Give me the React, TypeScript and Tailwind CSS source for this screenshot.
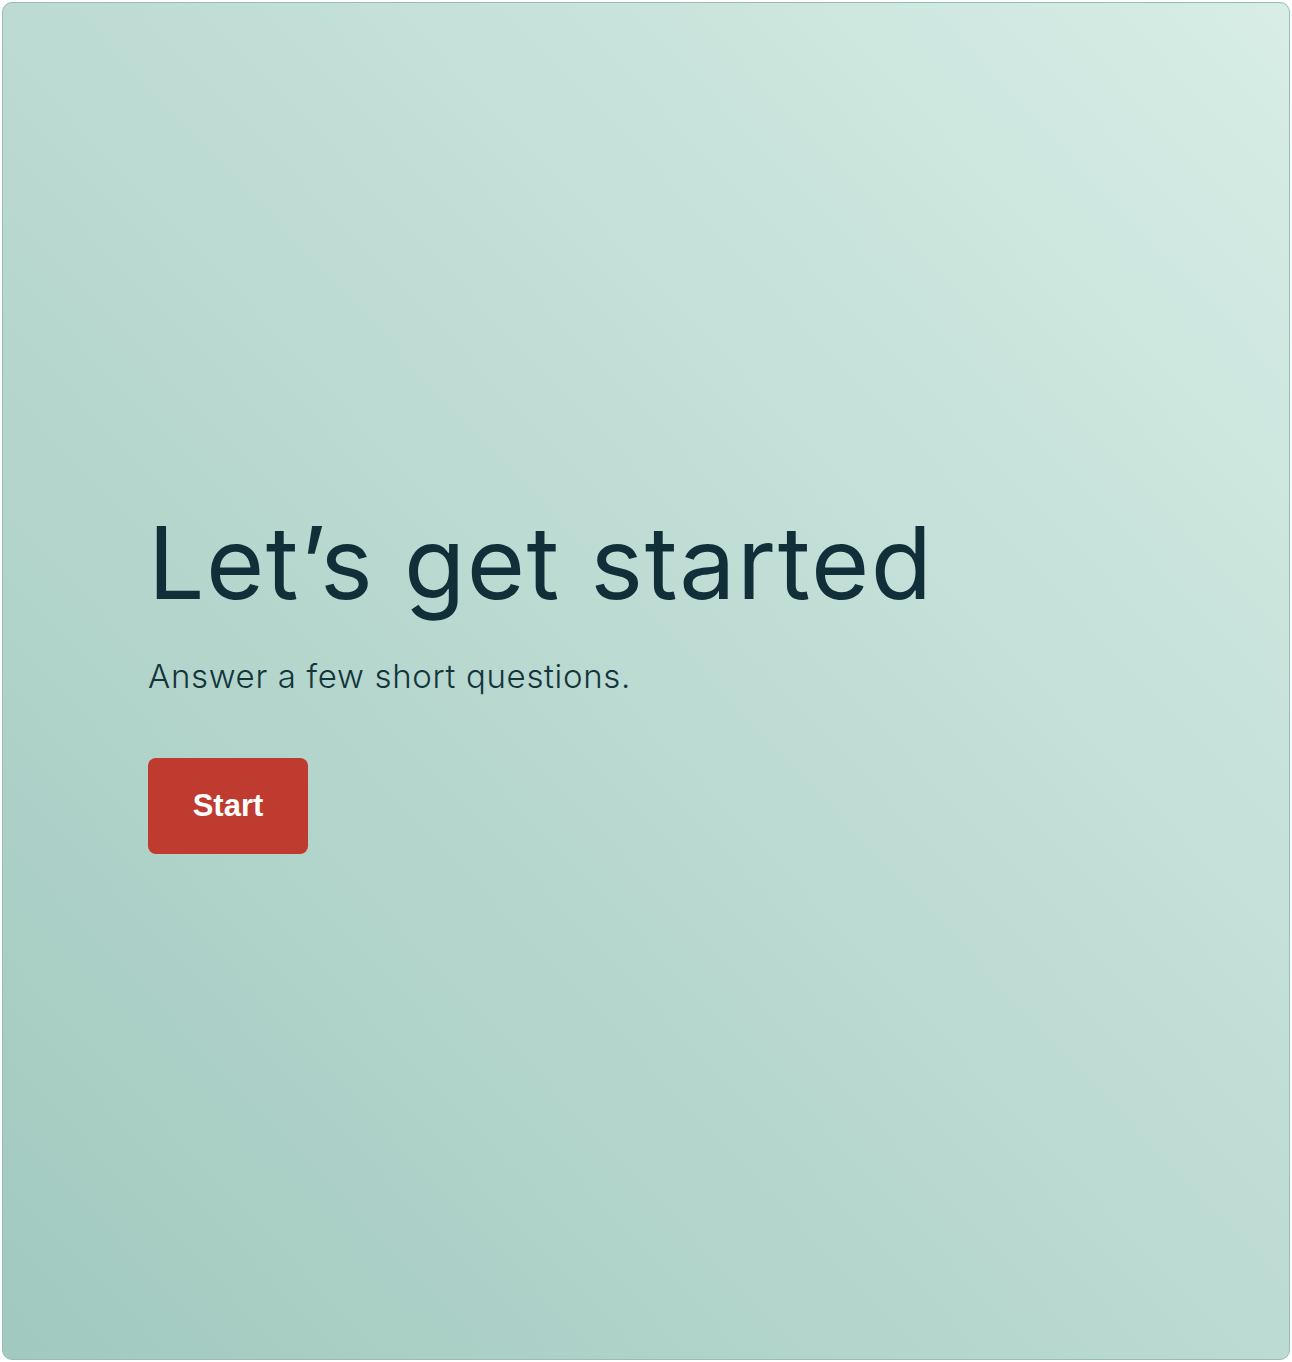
export default function App() {
  return (
    <div className="min-h-screen bg-white p-[2px]">
      <div className="flex h-[1358px] flex-col justify-center rounded-[10px] border border-[#96bfb4] bg-gradient-to-tr from-[#a1c9bf] to-[#d7ede6] pl-[145px]">
        <h1 className="font-['Inter',sans-serif] text-[100px] font-normal leading-[1.1] tracking-[0.015em] text-[#112f38]">
          Let’s get started
        </h1>
        <p className="mt-[34px] font-['Inter',sans-serif] text-[33px] font-light tracking-[0.02em] text-[#14353c]">
          Answer a few short questions.
        </p>
        <div className="mt-[56px]">
          <button className="flex h-[96px] w-[160px] items-center justify-center rounded-[8px] bg-[#bf3a2f] font-['Liberation_Sans',Arial,sans-serif] text-[31px] font-bold text-white">
            Start
          </button>
        </div>
      </div>
    </div>
  );
}
